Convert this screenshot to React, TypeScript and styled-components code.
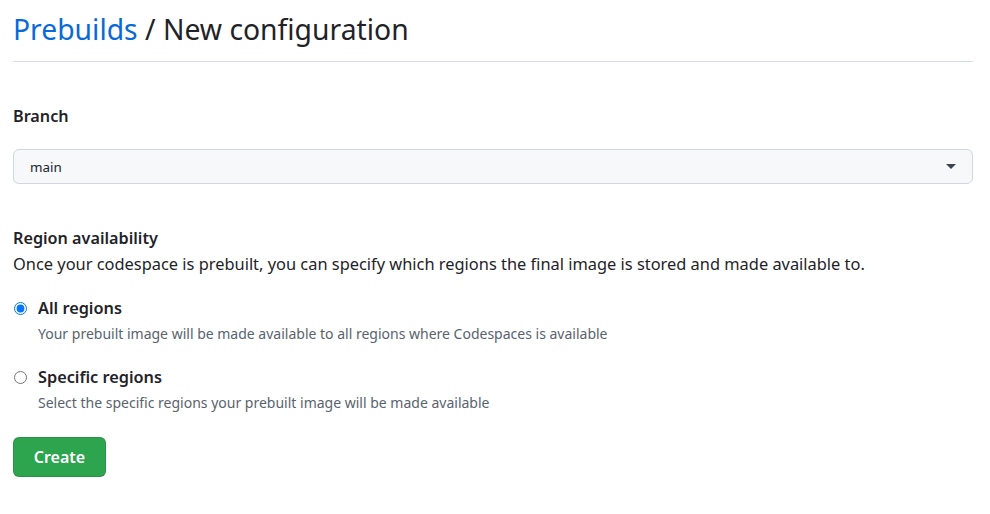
import React from 'react';
import styled, { createGlobalStyle } from 'styled-components';

const GlobalStyle = createGlobalStyle`
  body {
    margin: 0;
    background: #ffffff;
    color: #1f2328;
    font-family: "Noto Sans", "Open Sans", sans-serif;
  }
`;

const Page = styled.main`
  padding: 8px 17px 0 13px;
`;

const Header = styled.header`
  border-bottom: 1px solid #d8dee4;
  padding-bottom: 10px;
  margin-bottom: 42px;
`;

const Title = styled.h1`
  margin: 0;
  font-size: 28.3px;
  font-weight: 400;
  line-height: 43px;
  color: #1f2328;
`;

const Crumb = styled.a`
  color: #0969da;
  text-decoration: none;
`;

const Section = styled.section<{ gap?: number }>`
  margin-bottom: ${(p) => p.gap ?? 0}px;
`;

const Label = styled.div`
  font-size: 16.2px;
  font-weight: 600;
  line-height: 24px;
`;

const Description = styled.p`
  margin: 2px 0 0;
  font-size: 16.4px;
  line-height: 24px;
`;

const SelectBox = styled.div`
  margin-top: 21px;
  height: 33px;
  border: 1px solid #d0d7de;
  border-radius: 6px;
  background: #f6f8fa;
  display: flex;
  align-items: center;
  justify-content: space-between;
  padding: 0 16px;
  font-size: 13.4px;
`;

const Caret = styled.span`
  width: 0;
  height: 0;
  border-left: 5px solid transparent;
  border-right: 5px solid transparent;
  border-top: 5px solid #3d444d;
`;

const Options = styled.div`
  margin-top: 21px;
  display: flex;
  flex-direction: column;
  gap: 22px;
`;

const Option = styled.label`
  display: grid;
  grid-template-columns: 25px 1fr;
  cursor: pointer;
`;

const Radio = styled.input`
  margin: 5px 0 0 1px;
  width: 13px;
  height: 13px;
  accent-color: #0075ff;
`;

const OptionTitle = styled.div`
  font-size: 16.3px;
  font-weight: 600;
  line-height: 22px;
`;

const OptionNote = styled.div`
  grid-column: 2;
  margin-top: 5px;
  font-size: 14px;
  line-height: 20px;
  color: #59636e;
`;

const CreateButton = styled.button`
  margin-top: 24px;
  width: 93px;
  height: 40px;
  border: 1px solid rgba(31, 35, 40, 0.15);
  border-radius: 6px;
  background: #2da44e;
  color: #ffffff;
  font-family: inherit;
  font-size: 16px;
  font-weight: 600;
  cursor: pointer;
`;

const regions = [
  {
    id: 'all',
    title: 'All regions',
    note: 'Your prebuilt image will be made available to all regions where Codespaces is available',
  },
  {
    id: 'specific',
    title: 'Specific regions',
    note: 'Select the specific regions your prebuilt image will be made available',
  },
];

export default function App() {
  const [region, setRegion] = React.useState('all');
  return (
    <>
      <GlobalStyle />
      <Page>
        <Header>
          <Title>
            <Crumb href="#">Prebuilds</Crumb> / New configuration
          </Title>
        </Header>
        <Section gap={42}>
          <Label>Branch</Label>
          <SelectBox>
            <span>main</span>
            <Caret />
          </SelectBox>
        </Section>
        <Section>
          <Label>Region availability</Label>
          <Description>
            Once your codespace is prebuilt, you can specify which regions the final image is stored and made
            available to.
          </Description>
          <Options>
            {regions.map((r) => (
              <Option key={r.id}>
                <Radio
                  type="radio"
                  name="region"
                  checked={region === r.id}
                  onChange={() => setRegion(r.id)}
                />
                <OptionTitle>{r.title}</OptionTitle>
                <OptionNote>{r.note}</OptionNote>
              </Option>
            ))}
          </Options>
          <CreateButton>Create</CreateButton>
        </Section>
      </Page>
    </>
  );
}
